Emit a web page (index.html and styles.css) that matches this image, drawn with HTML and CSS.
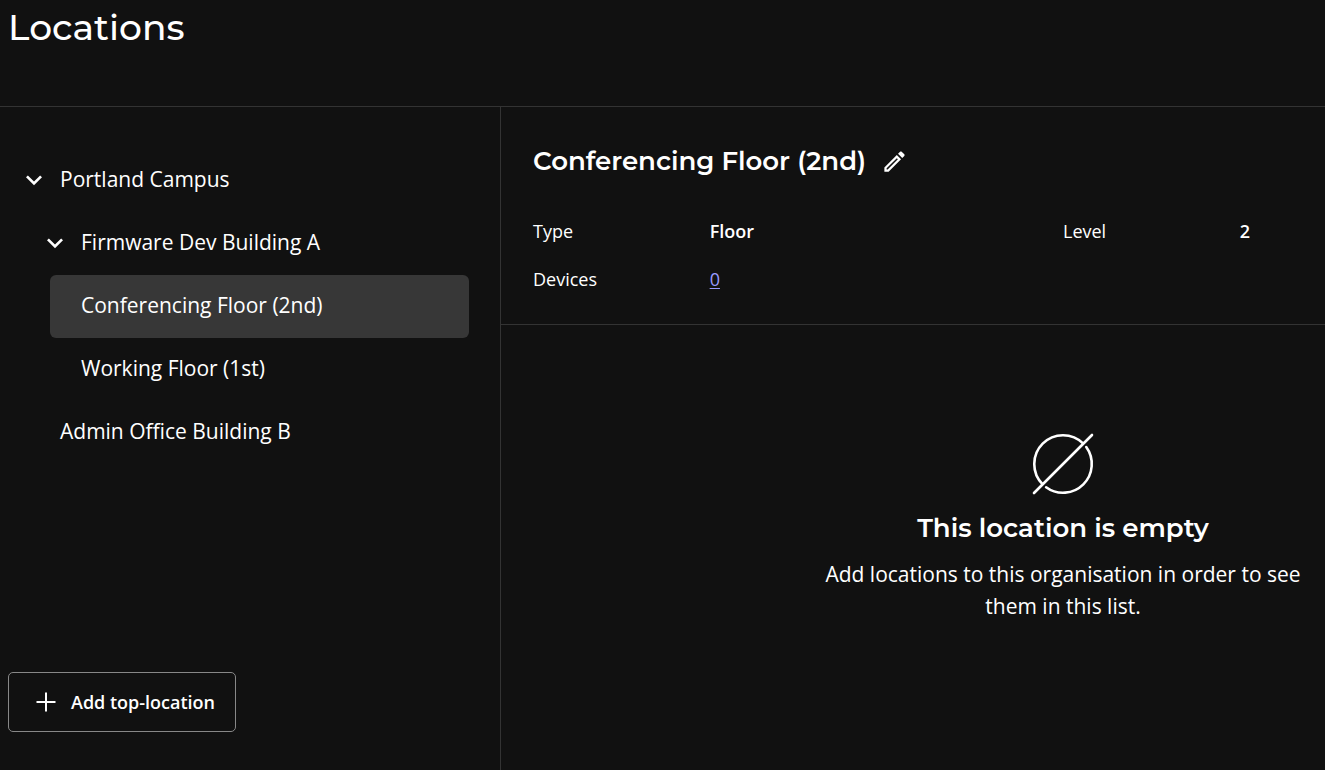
FILE: index.html
```html
<!DOCTYPE html>
<html lang="en">
<head>
<meta charset="utf-8">
<title>Locations</title>
<link rel="stylesheet" href="styles.css">
</head>
<body>
<div class="page">
  <header class="page-header">
    <h1 class="page-title">Locations</h1>
  </header>
  <div class="content">
    <aside class="sidebar">
      <nav class="tree" aria-label="Locations">
        <ul class="tree-list">
          <li>
            <div class="tree-row">
              <button class="toggle" type="button" aria-label="Collapse Portland Campus" aria-expanded="true"><svg class="chevron" viewBox="0 0 24 24" aria-hidden="true"><path d="M7.41 8.59 12 13.17l4.59-4.58L18 10l-6 6-6-6z"/></svg></button>
              <button class="tree-item" type="button">Portland Campus</button>
            </div>
            <ul class="tree-list nested">
              <li>
                <div class="tree-row">
                  <button class="toggle" type="button" aria-label="Collapse Firmware Dev Building A" aria-expanded="true"><svg class="chevron" viewBox="0 0 24 24" aria-hidden="true"><path d="M7.41 8.59 12 13.17l4.59-4.58L18 10l-6 6-6-6z"/></svg></button>
                  <button class="tree-item" type="button">Firmware Dev Building A</button>
                </div>
                <ul class="tree-list leaves">
                  <li class="tree-row selected"><button class="tree-item" type="button" aria-current="true">Conferencing Floor (2nd)</button></li>
                  <li class="tree-row"><button class="tree-item" type="button">Working Floor (1st)</button></li>
                </ul>
              </li>
            </ul>
          </li>
          <li class="tree-row root-leaf"><button class="tree-item" type="button">Admin Office Building B</button></li>
        </ul>
      </nav>
      <button class="add-button" type="button">
        <svg class="plus" viewBox="0 0 20 20" aria-hidden="true"><path d="M10 .5v19M.5 10h19"/></svg>
        Add top-location
      </button>
    </aside>
    <main class="detail">
      <section class="summary">
        <div class="detail-heading">
          <h2 class="heading">Conferencing Floor (2nd)</h2>
          <button class="edit-button" type="button" aria-label="Edit location"><svg class="pencil" viewBox="0 0 24 24" aria-hidden="true"><path d="M14.06 9.02l.92.92L5.92 19H5v-.92l9.06-9.06M17.66 3c-.25 0-.51.1-.7.29l-1.83 1.83 3.75 3.75 1.83-1.83c.39-.39.39-1.02 0-1.41l-2.34-2.34c-.2-.2-.45-.29-.71-.29zm-3.6 3.19L3 17.25V21h3.75L17.81 9.94l-3.75-3.75z"/></svg></button>
        </div>
        <dl class="facts">
          <dt>Type</dt><dd>Floor</dd>
          <dt>Level</dt><dd>2</dd>
          <dt>Devices</dt><dd><a class="link" href="#devices">0</a></dd>
        </dl>
      </section>
      <section class="empty">
        <svg class="empty-icon" viewBox="0 0 62 62" aria-hidden="true"><path d="M2 60 60 2M51.330 10.670A28.750 28.750 0 0 0 10.670 51.330M54.260 14.100A28.750 28.750 0 0 1 14.100 54.260"/></svg>
        <h2 class="heading">This location is empty</h2>
        <p class="empty-text">Add locations to this organisation in order to see them in this list.</p>
      </section>
    </main>
  </div>
</div>
</body>
</html>
```
FILE: styles.css
```css
* { box-sizing: border-box; }

body {
  margin: 0;
  background: #111;
  color: #fff;
  font-family: "Open Sans", "Noto Sans", sans-serif;
  font-size: 18px;
  line-height: 24px;
}

button {
  padding: 0;
  border: 0;
  background: none;
  color: inherit;
  font: inherit;
  cursor: pointer;
}

svg { display: block; fill: currentColor; }

.page {
  display: flex;
  flex-direction: column;
  height: 100vh;
  overflow: hidden;
}

.page-header {
  padding: 4px 8px 55px;
  border-bottom: 1px solid #333;
}

.page-title,
.heading {
  margin: 0;
  font-family: Montserrat, Inter, "Open Sans", sans-serif;
}

.page-title {
  font-size: 36px;
  font-weight: 500;
  line-height: 47px;
}

.heading {
  font-size: 26px;
  font-weight: 600;
  line-height: 32px;
}

.content { display: flex; flex: 1; min-height: 0; }

.sidebar {
  display: flex;
  flex-direction: column;
  flex: none;
  width: 501px;
  padding: 42px 31px 38px 8px;
  border-right: 1px solid #333;
}

.tree { flex: 1; }

.tree-list { margin: 0; padding: 0; list-style: none; }
.nested { padding-left: 21px; }
.leaves { padding-left: 21px; }

.tree-row {
  display: flex;
  align-items: center;
  height: 63px;
  padding-bottom: 4px;
  border-radius: 6px;
}

.leaves .tree-row { padding-left: 31px; }
.root-leaf { padding-left: 52px; }
.selected { background: #373737; }

.toggle { width: 52px; padding: 2px 0 0 10px; }
.chevron { width: 32px; height: 32px; }

.tree-item {
  flex: 1;
  font-size: 21px;
  line-height: 32px;
  text-align: left;
}

.add-button {
  display: flex;
  align-items: center;
  align-self: flex-start;
  gap: 15px;
  height: 60px;
  padding: 0 20px 0 27px;
  border: 1px solid #888;
  border-radius: 5px;
  font-weight: 600;
}

.plus {
  width: 20px;
  height: 20px;
  fill: none;
  stroke: currentColor;
  stroke-width: 2;
}

.detail { flex: 1 0 auto; min-width: 1124px; width: 0; }

.summary {
  padding: 38px 32px 32px;
  border-bottom: 1px solid #333;
}

.detail-heading { display: flex; align-items: center; gap: 15px; }
.pencil { width: 27px; height: 27px; }

.facts {
  display: grid;
  grid-template-columns: 1fr 2fr 1fr 2fr;
  row-gap: 24px;
  margin: 42px 0 0;
  padding-bottom: 1px;
}

.facts dd { margin: 0; font-weight: 600; }

.link { color: #99f; font-weight: 400; text-underline-offset: 2px; }

.empty {
  display: flex;
  flex-direction: column;
  align-items: center;
  padding: 108px 32px;
  text-align: center;
}

.empty-icon {
  width: 62px;
  height: 62px;
  margin-bottom: 17px;
  fill: none;
  stroke: currentColor;
  stroke-width: 2.6;
  stroke-linecap: round;
}

.empty-text {
  max-width: 490px;
  margin: 14px 0 0;
  font-size: 21px;
  line-height: 32px;
}
```
